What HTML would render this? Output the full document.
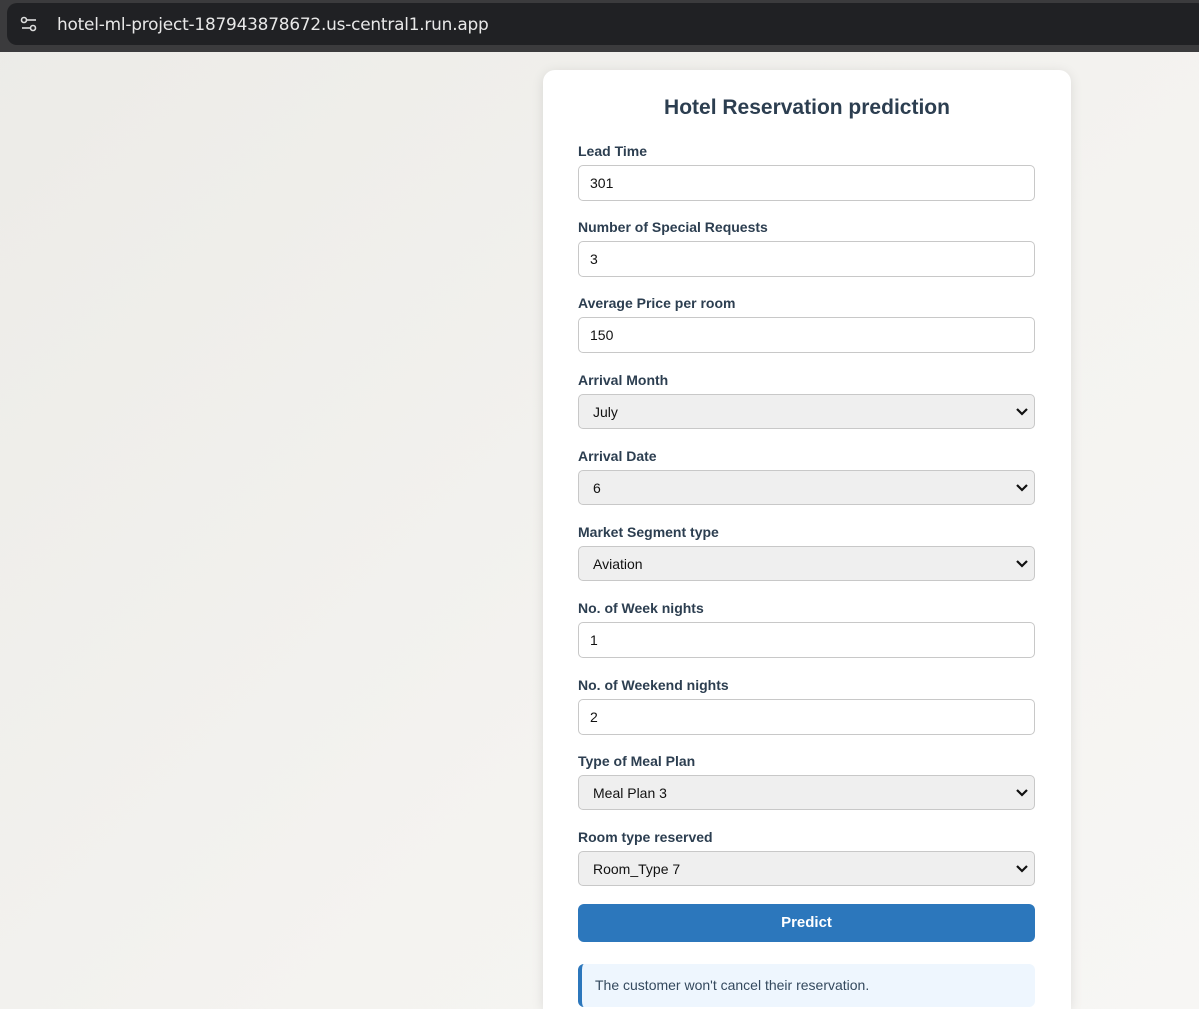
<!DOCTYPE html>
<html><head><style>
*{box-sizing:border-box;margin:0;padding:0}
html{width:1199px;height:1009px;overflow:hidden}
body{width:1199px;height:1009px;overflow:hidden;background:linear-gradient(135deg,#ecebe7,#f4f3f0 60%,#f7f6f4);font-family:"Liberation Sans",sans-serif;position:relative}
.bar{position:absolute;left:0;top:0;width:1199px;height:52px;background:#3b3b3d}
.url{position:absolute;left:7px;top:3px;width:1200px;height:42px;background:#202124;border-radius:10px}
.url span{position:absolute;left:50px;top:11px;color:#e8e8e8;font-size:16.9px;font-family:"DejaVu Sans","Liberation Sans",sans-serif;letter-spacing:-0.2px}
.card{position:absolute;left:543px;top:70px;width:528px;height:939px;background:#fff;border-radius:12px 12px 0 0;box-shadow:0 2px 12px rgba(0,0,0,.1)}
h1{position:absolute;left:543px;top:96px;width:528px;text-align:center;font-size:21px;color:#2c3e50;font-weight:bold}
.l{position:absolute;left:578px;font-size:14px;font-weight:bold;color:#2c3e50}
.i{position:absolute;left:578px;width:457px;height:36px;border:1px solid #c8c8c8;border-radius:5px;background:#fff;font-size:14px;color:#111;padding:9px 0 0 11px}
.s{background:#efefef;height:35px;padding:9px 0 0 14px}
.s svg{position:absolute;right:5px;top:12px}
.btn{position:absolute;left:578px;top:904px;width:457px;height:38px;background:#2c77bc;border-radius:6px;color:#fff;font-weight:bold;font-size:15px;text-align:center;line-height:38px}
.res{position:absolute;left:578px;top:964px;width:457px;height:43px;background:#eef6fe;border-left:4px solid #2c77bc;border-radius:6px;font-size:14px;color:#34495e;padding:13px 0 0 13px}
</style></head><body>
<div class="bar"><div class="url">
<svg style="position:absolute;left:13px;top:13px" width="18" height="16" viewBox="0 0 18 16" fill="none" stroke="#ddd" stroke-width="1.6"><circle cx="4" cy="4" r="2.5"/><line x1="7" y1="4" x2="16" y2="4"/><circle cx="13" cy="12" r="2.5"/><line x1="2" y1="12" x2="10" y2="12"/></svg>
<span>hotel-ml-project-187943878672.us-central1.run.app</span></div></div>
<div class="card"></div>
<h1>Hotel Reservation prediction</h1>
<div class="l" style="top:143px">Lead Time</div><div class="i" style="top:165px">301</div>
<div class="l" style="top:219px">Number of Special Requests</div><div class="i" style="top:241px">3</div>
<div class="l" style="top:295px">Average Price per room</div><div class="i" style="top:317px">150</div>
<div class="l" style="top:372px">Arrival Month</div><div class="i s" style="top:394px">July<svg width="14" height="10" viewBox="0 0 14 10"><path d="M2 2l5 5 5-5" stroke="#111" stroke-width="2.2" fill="none"/></svg></div>
<div class="l" style="top:448px">Arrival Date</div><div class="i s" style="top:470px">6<svg width="14" height="10" viewBox="0 0 14 10"><path d="M2 2l5 5 5-5" stroke="#111" stroke-width="2.2" fill="none"/></svg></div>
<div class="l" style="top:524px">Market Segment type</div><div class="i s" style="top:546px">Aviation<svg width="14" height="10" viewBox="0 0 14 10"><path d="M2 2l5 5 5-5" stroke="#111" stroke-width="2.2" fill="none"/></svg></div>
<div class="l" style="top:600px">No. of Week nights</div><div class="i" style="top:622px">1</div>
<div class="l" style="top:677px">No. of Weekend nights</div><div class="i" style="top:699px">2</div>
<div class="l" style="top:753px">Type of Meal Plan</div><div class="i s" style="top:775px">Meal Plan 3<svg width="14" height="10" viewBox="0 0 14 10"><path d="M2 2l5 5 5-5" stroke="#111" stroke-width="2.2" fill="none"/></svg></div>
<div class="l" style="top:829px">Room type reserved</div><div class="i s" style="top:851px">Room_Type 7<svg width="14" height="10" viewBox="0 0 14 10"><path d="M2 2l5 5 5-5" stroke="#111" stroke-width="2.2" fill="none"/></svg></div>
<div class="btn">Predict</div>
<div class="res">The customer won't cancel their reservation.</div>
</body></html>
